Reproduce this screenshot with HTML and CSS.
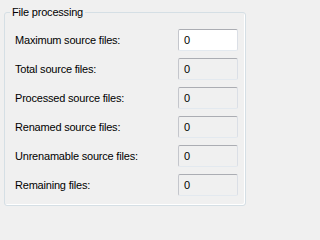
FILE: index.html
```html
<!DOCTYPE html>
<html>
<head>
<meta charset="utf-8">
<link rel="stylesheet" href="styles.css">
</head>
<body>
<fieldset class="group">
  <legend class="group-title">File processing</legend>
  <div class="rows">
    <label class="label">Maximum source files:</label>
    <div class="field editable">0</div>
    <label class="label">Total source files:</label>
    <div class="field">0</div>
    <label class="label">Processed source files:</label>
    <div class="field">0</div>
    <label class="label">Renamed source files:</label>
    <div class="field">0</div>
    <label class="label">Unrenamable source files:</label>
    <div class="field">0</div>
    <label class="label">Remaining files:</label>
    <div class="field">0</div>
  </div>
</fieldset>
</body>
</html>
```
FILE: styles.css
```css
html, body {
  margin: 0;
  padding: 0;
  background: #f0f0f0;
  width: 250px;
  height: 212px;
  overflow: hidden;
}
body {
  font-family: "Liberation Sans", Arial, sans-serif;
  font-size: 11px;
  letter-spacing: -0.2px;
  color: #000;
}
.group {
  margin: 6px 0 0 4px;
  width: 242px;
  box-sizing: border-box;
  border: 1px solid #d5dfe5;
  border-radius: 3px;
  box-shadow: inset -1px -1px 0 #fff;
  padding: 10px 7px 9px 10px;
  min-width: 0;
}
.group-title {
  padding: 0 2px;
  margin-left: -5px;
  line-height: 13px;
}
.rows {
  display: grid;
  grid-template-columns: 1fr 60px;
  grid-auto-rows: 22px;
  row-gap: 7px;
  align-items: center;
}
.label {
  white-space: nowrap;
}
.field {
  box-sizing: border-box;
  height: 22px;
  border: 1px solid #dbdfe6;
  border-top-color: #abadb3;
  border-left-color: #c4c6cc;
  border-bottom-color: #e3e9ef;
  border-radius: 2px;
  padding: 0 0 0 5px;
  line-height: 20px;
  background: #f0f0f0;
}
.field.editable {
  background: #fff;
}
```
